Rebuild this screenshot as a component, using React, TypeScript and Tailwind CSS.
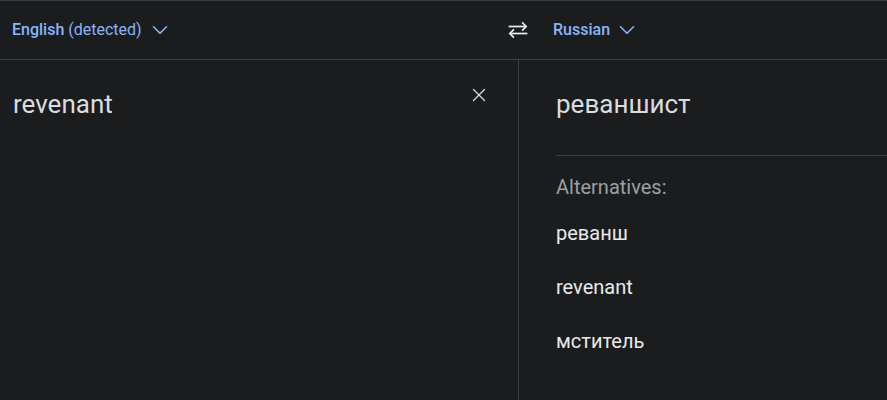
import { ChevronDown, X } from "lucide-react";

const alternatives = ["реванш", "revenant", "мститель"];

const SwapIcon = () => (
  <svg width="28" height="28" viewBox="0 0 24 24" fill="none" stroke="currentColor" strokeWidth="1.5">
    <path d="M4 9h15" />
    <path d="M15.5 5.5 19 9l-3.5 3.5" />
    <path d="M20 15H5" />
    <path d="M8.5 11.5 5 15l3.5 3.5" />
  </svg>
);

export default function App() {
  return (
    <div
      className="h-[400px] w-full overflow-hidden bg-[#1b1c1e] border-t border-[#3c4043] flex flex-col"
      style={{ fontFamily: "Roboto, 'Noto Sans', sans-serif" }}
    >
      <div className="h-[59px] shrink-0 flex items-center border-b border-[#3c4043]">
        <div className="w-[498px] pl-[12px] flex items-center gap-[5px] text-[16px] text-[#8ab4f8]">
          <span>
            <span className="font-medium">English</span> (detected)
          </span>
          <ChevronDown size={26} strokeWidth={1.5} />
        </div>
        <div className="w-[40px] flex justify-center text-[#e8eaed]">
          <SwapIcon />
        </div>
        <div className="pl-[15px] flex items-center gap-[4px] text-[16px] text-[#8ab4f8]">
          <span className="font-medium">Russian</span>
          <ChevronDown size={26} strokeWidth={1.5} />
        </div>
      </div>
      <div className="flex flex-1">
        <div className="w-[519px] shrink-0 border-r border-[#3c4043] flex justify-between pl-[13px] pr-[28px] pt-[28px]">
          <div className="text-[26px] leading-[32px] text-[#dadce0]">revenant</div>
          <X size={22} strokeWidth={1.4} className="text-[#dadce0] -mt-[4px]" />
        </div>
        <div className="flex-1 pl-[37px] pt-[28px]">
          <div className="text-[26px] leading-[32px] text-[#dadce0]">реваншист</div>
          <div className="mt-[35px] border-t border-[#3c4043]" />
          <div className="mt-[19px] text-[20px] leading-[24px] text-[#9aa0a6]">Alternatives:</div>
          <div className="mt-[7px] flex flex-col">
            {alternatives.map((a) => (
              <div key={a} className="h-[54px] flex items-center text-[20px] text-[#e8eaed]">
                {a}
              </div>
            ))}
          </div>
        </div>
      </div>
    </div>
  );
}
